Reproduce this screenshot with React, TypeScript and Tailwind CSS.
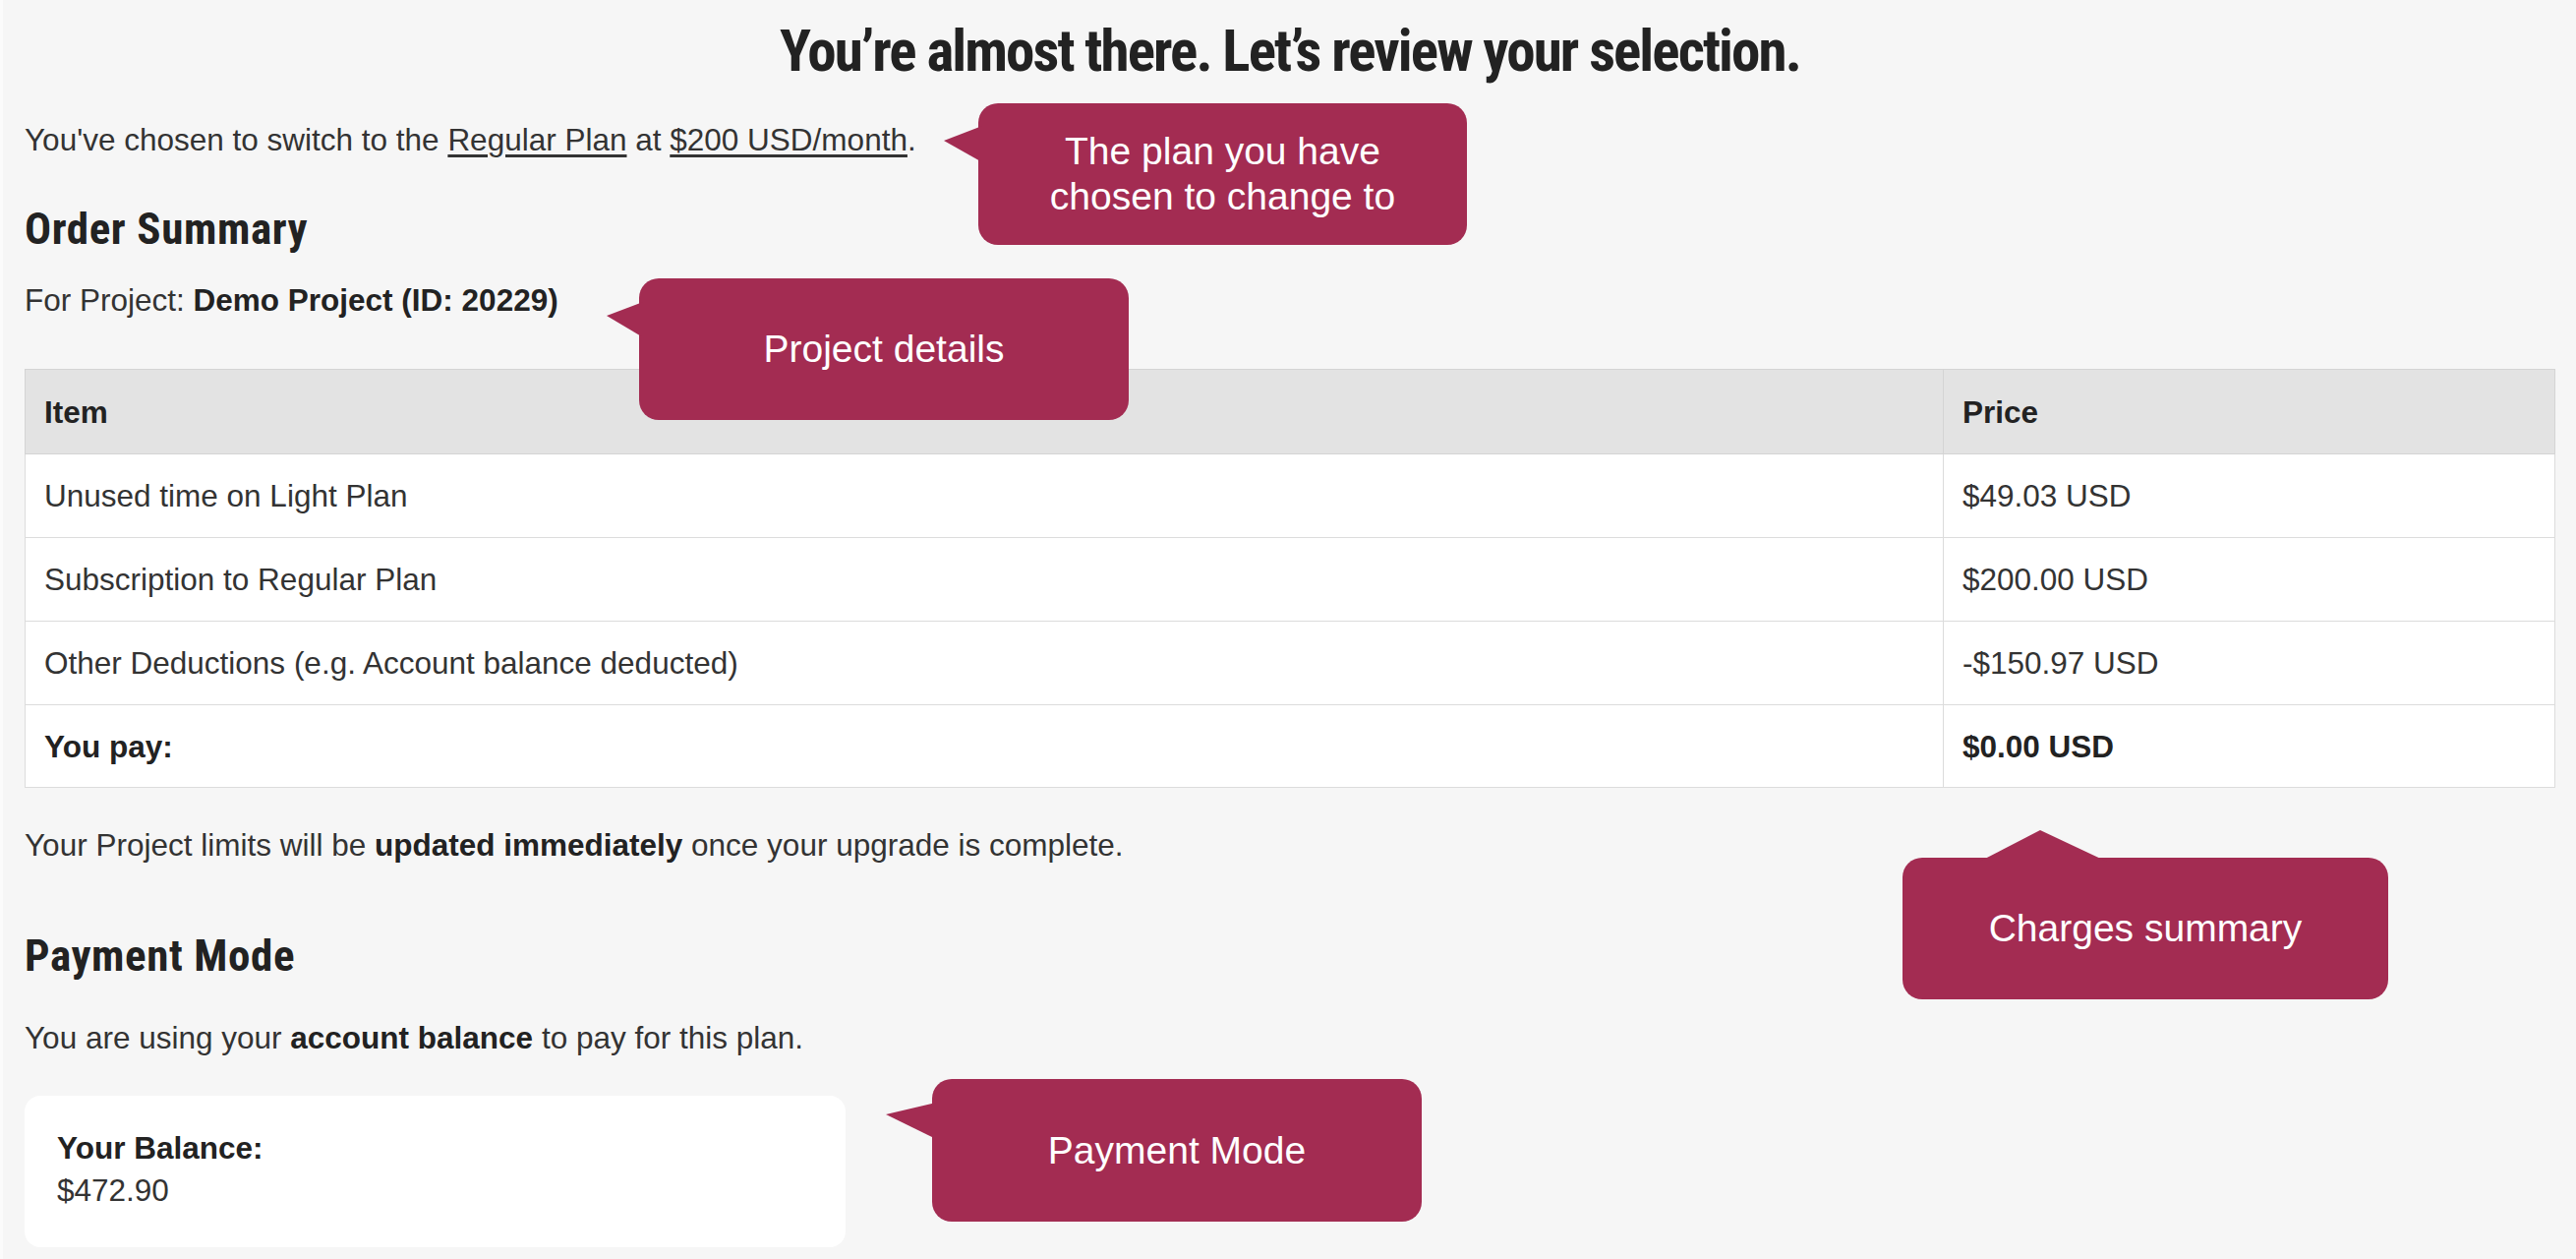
import React from 'react';

const Callout = ({ className, children }: { className: string; children: React.ReactNode }) => (
  <div
    className={`absolute flex items-center justify-center rounded-[20px] bg-[#a32c52] text-center font-['Liberation_Sans',Arial,sans-serif] text-[39px] leading-[46px] text-white ${className}`}
  >
    {children}
  </div>
);

const rows = [
  { item: 'Unused time on Light Plan', price: '$49.03 USD' },
  { item: 'Subscription to Regular Plan', price: '$200.00 USD' },
  { item: 'Other Deductions (e.g. Account balance deducted)', price: '-$150.97 USD' },
];

const App = () => {
  return (
    <div className="relative min-h-[1280px] w-full border-l-[3px] border-[#fbfbfb] bg-[#f6f6f6] pl-[22px] pr-[21px] pt-[22px] font-['Liberation_Sans',Arial,sans-serif] text-[31.5px] leading-[40px] text-[#333]">
      {/* Heading */}
      <h1 className="text-center font-['Roboto',sans-serif] text-[59px] font-bold leading-[59px] tracking-[-1.9px] text-[#222] font-stretch-condensed">
        You’re almost there. Let’s review your selection.
      </h1>

      <p className="mt-[41px]">
        You've chosen to switch to the <span className="underline underline-offset-[4px]">Regular Plan</span> at{' '}
        <span className="underline underline-offset-[4px]">$200 USD/month</span>.
      </p>

      {/* Order summary */}
      <h2 className="mt-[49px] font-['Roboto',sans-serif] text-[45px] font-bold leading-[43px] tracking-[0.6px] text-[#222] font-stretch-condensed">
        Order Summary
      </h2>
      <p className="mt-[31px]">
        For Project: <strong className="font-bold text-[#222]">Demo Project (ID: 20229)</strong>
      </p>

      <table className="mt-[50px] w-full border-collapse border border-[#d4d4d4]">
        <thead>
          <tr className="bg-[#e3e3e3]">
            <th className="h-[86px] border border-[#d4d4d4] px-[19px] text-left font-bold text-[#222]">Item</th>
            <th className="h-[86px] w-[622px] border border-[#d4d4d4] px-[19px] text-left font-bold text-[#222]">
              Price
            </th>
          </tr>
        </thead>
        <tbody className="bg-white">
          {rows.map((r) => (
            <tr key={r.item}>
              <td className="h-[85px] border border-[#dcdcdc] px-[19px]">{r.item}</td>
              <td className="h-[85px] border border-[#dcdcdc] px-[19px]">{r.price}</td>
            </tr>
          ))}
          <tr>
            <td className="h-[84px] border border-[#dcdcdc] px-[19px] font-bold text-[#222]">You pay:</td>
            <td className="h-[84px] border border-[#dcdcdc] px-[19px] font-bold text-[#222]">$0.00 USD</td>
          </tr>
        </tbody>
      </table>

      <p className="mt-[38px]">
        Your Project limits will be <strong className="font-bold text-[#222]">updated immediately</strong> once your
        upgrade is complete.
      </p>

      {/* Payment */}
      <h2 className="mt-[71px] font-['Roboto',sans-serif] text-[45px] font-bold leading-[43px] tracking-[0.6px] text-[#222] font-stretch-condensed">
        Payment Mode
      </h2>
      <p className="mt-[42px]">
        You are using your <strong className="font-bold text-[#222]">account balance</strong> to pay for this plan.
      </p>

      <div className="mt-[39px] w-[835px] rounded-[16px] bg-white pb-[36px] pl-[33px] pt-[32px] leading-[43px]">
        <div className="font-bold text-[#222]">Your Balance:</div>
        <div>$472.90</div>
      </div>

      {/* Annotations */}
      <Callout className="left-[992px] top-[105px] h-[144px] w-[497px]">
        <svg className="absolute left-[-36px] top-[20px] h-[44px] w-[40px]" viewBox="0 0 40 44">
          <polygon points="40,3 1,18 40,40" fill="#a32c52" />
        </svg>
        <span className="relative">
          The plan you have
          <br />
          chosen to change to
        </span>
      </Callout>

      <Callout className="left-[647px] top-[283px] h-[144px] w-[498px]">
        <svg className="absolute left-[-34px] top-[20px] h-[44px] w-[38px]" viewBox="0 0 38 44">
          <polygon points="38,4 1,18 38,40" fill="#a32c52" />
        </svg>
        <span className="relative">Project details</span>
      </Callout>

      <Callout className="left-[1932px] top-[872px] h-[144px] w-[494px]">
        <svg className="absolute left-[76px] top-[-30px] h-[34px] w-[134px]" viewBox="0 0 134 34">
          <polygon points="2,34 64,2 132,34" fill="#a32c52" />
        </svg>
        <span className="relative">Charges summary</span>
      </Callout>

      <Callout className="left-[945px] top-[1097px] h-[145px] w-[498px]">
        <svg className="absolute left-[-48px] top-[20px] h-[44px] w-[52px]" viewBox="0 0 52 44">
          <polygon points="52,4 1,16 52,41" fill="#a32c52" />
        </svg>
        <span className="relative">Payment Mode</span>
      </Callout>
    </div>
  );
};

export default App;
